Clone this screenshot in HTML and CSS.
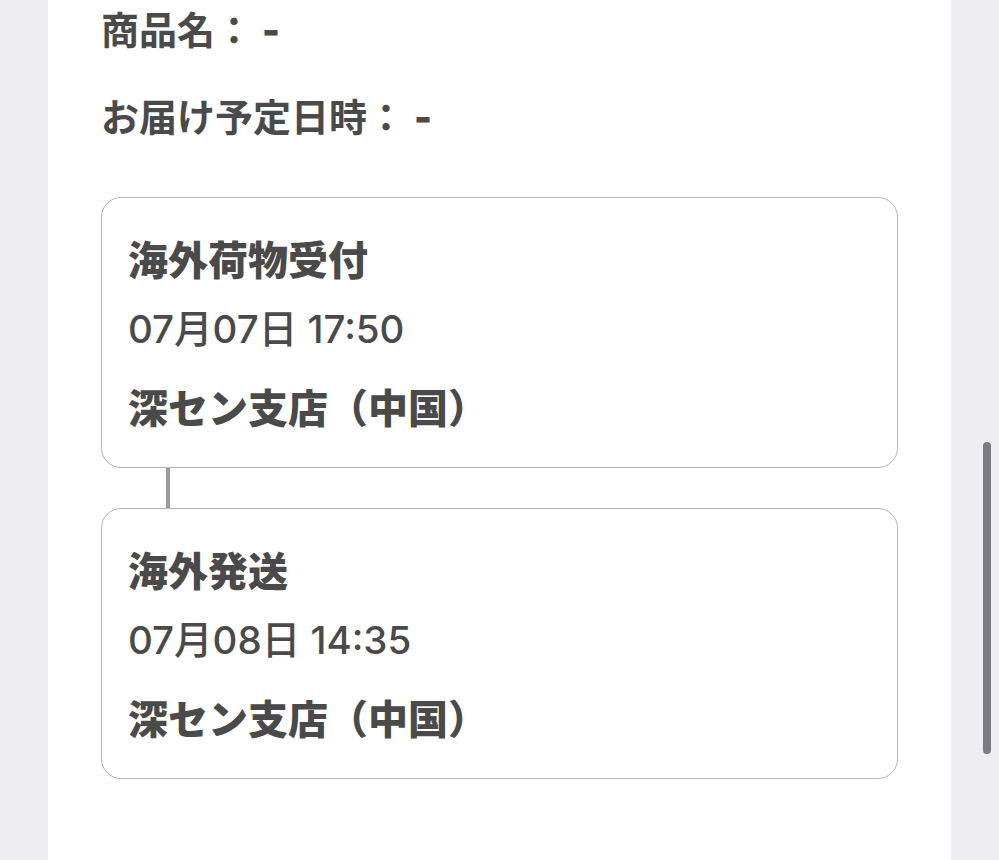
FILE: index.html
```html
<!DOCTYPE html>
<html lang="ja">
<head>
    <meta charset="UTF-8">
    <meta name="viewport" content="width=device-width, initial-scale=1.0">
    <title>配送状況</title>
    <link rel="stylesheet" href="styles.css">
</head>
<body>
    <div class="page">
        <div class="panel">
            <div class="info-row">商品名：<span class="info-value">-</span></div>
            <div class="info-row">お届け予定日時：<span class="info-value">-</span></div>

            <div class="timeline">
                <div class="step-card">
                    <div class="step-title">海外荷物受付</div>
                    <div class="step-date">07月07日 17:50</div>
                    <div class="step-place">深セン支店（中国）</div>
                </div>
                <div class="step-line"></div>
                <div class="step-card">
                    <div class="step-title">海外発送</div>
                    <div class="step-date">07月08日 14:35</div>
                    <div class="step-place">深セン支店（中国）</div>
                </div>
            </div>
        </div>
        <div class="scrollbar"></div>
    </div>
</body>
</html>
```

FILE: styles.css
```css
* {
    margin: 0;
    padding: 0;
    box-sizing: border-box;
}

body {
    font-family: Inter, 'Noto Sans CJK JP', sans-serif;
    background: #ededf2;
    color: #4a4a4a;
    height: 860px;
    overflow: hidden;
}

.page {
    position: relative;
    height: 860px;
    padding-left: 48px;
}

.panel {
    width: 903px;
    height: 860px;
    background: #fff;
    padding: 0 53px;
}

.info-row {
    font-family: 'Noto Sans CJK JP', sans-serif;
    font-size: 38px;
    font-weight: 600;
    line-height: 56px;
    height: 56px;
    margin-bottom: 31px;
}

.info-value {
    font-family: Inter, sans-serif;
    font-weight: 900;
    line-height: 1;
    margin-left: 9px;
}

.timeline {
    padding-top: 23px;
}

.step-card {
    border: 1px solid #b4b4b8;
    border-radius: 20px;
    height: 271px;
    padding: 32px 0 0 26px;
}

.step-title {
    font-family: 'Noto Sans CJK JP', sans-serif;
    font-size: 40px;
    font-weight: 900;
    line-height: 56px;
}

.step-date {
    font-size: 38.5px;
    font-weight: 500;
    line-height: 56px;
    margin-top: 15px;
}

.step-place {
    font-family: 'Noto Sans CJK JP', sans-serif;
    font-size: 40px;
    font-weight: 900;
    line-height: 56px;
    margin-top: 21px;
}

.step-line {
    width: 4px;
    height: 40px;
    margin-left: 65px;
    background: #9a9a9a;
}

.scrollbar {
    position: absolute;
    left: 983px;
    top: 442px;
    width: 8px;
    height: 312px;
    border-radius: 4px;
    background: #7b7a80;
}
```
